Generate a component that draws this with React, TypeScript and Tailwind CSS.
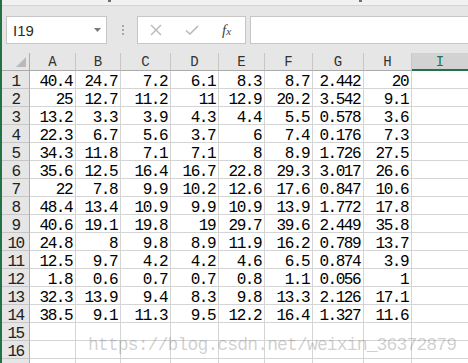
import React from "react";

const data: string[][] = [
  ["40.4", "24.7", "7.2", "6.1", "8.3", "8.7", "2.442", "20"],
  ["25", "12.7", "11.2", "11", "12.9", "20.2", "3.542", "9.1"],
  ["13.2", "3.3", "3.9", "4.3", "4.4", "5.5", "0.578", "3.6"],
  ["22.3", "6.7", "5.6", "3.7", "6", "7.4", "0.176", "7.3"],
  ["34.3", "11.8", "7.1", "7.1", "8", "8.9", "1.726", "27.5"],
  ["35.6", "12.5", "16.4", "16.7", "22.8", "29.3", "3.017", "26.6"],
  ["22", "7.8", "9.9", "10.2", "12.6", "17.6", "0.847", "10.6"],
  ["48.4", "13.4", "10.9", "9.9", "10.9", "13.9", "1.772", "17.8"],
  ["40.6", "19.1", "19.8", "19", "29.7", "39.6", "2.449", "35.8"],
  ["24.8", "8", "9.8", "8.9", "11.9", "16.2", "0.789", "13.7"],
  ["12.5", "9.7", "4.2", "4.2", "4.6", "6.5", "0.874", "3.9"],
  ["1.8", "0.6", "0.7", "0.7", "0.8", "1.1", "0.056", "1"],
  ["32.3", "13.9", "9.4", "8.3", "9.8", "13.3", "2.126", "17.1"],
  ["38.5", "9.1", "11.3", "9.5", "12.2", "16.4", "1.327", "11.6"],
  ["", "", "", "", "", "", "", ""],
  ["", "", "", "", "", "", "", ""],
  ["", "", "", "", "", "", "", ""],
];

const letters = ["A", "B", "C", "D", "E", "F", "G", "H"];

const Toolbar = () => (
  <div className="flex flex-col">
    {/* title strip */}
    <div className="h-[6px] bg-[#f1f1f1] border-b border-[#d4d4d4] flex items-start">
      <div className="ml-[106px] w-[3px] h-[2px] bg-[#6f6f6f]" />
      <div className="ml-[248px] w-[3px] h-[2px] bg-[#6f6f6f]" />
    </div>

    {/* name box + formula bar */}
    <div className="h-[47px] bg-[#e6e6e6] flex items-start pt-[10px]">
      <div className="ml-[4px] w-[101px] h-[28px] bg-white border border-[#c6c6c6] flex items-center justify-between pl-[6px] pr-[5px]">
        <span className="font-['Liberation_Sans',sans-serif] text-[15px] text-[#2b2b2b] leading-none">
          I19
        </span>
        <svg width="7" height="4" viewBox="0 0 7 4">
          <path d="M0 0 L7 0 L3.5 4 Z" fill="#7a7a7a" />
        </svg>
      </div>

      <div className="ml-[15px] h-[28px] flex flex-col justify-center gap-[2px]">
        <div className="w-[2px] h-[2px] bg-[#a8a8a8]" />
        <div className="w-[2px] h-[2px] bg-[#a8a8a8]" />
        <div className="w-[2px] h-[2px] bg-[#a8a8a8]" />
      </div>

      <div className="ml-[13px] w-[109px] h-[28px] bg-white border border-[#c6c6c6] flex items-center pl-[11px]">
        <svg width="14" height="14" viewBox="0 0 14 14">
          <path d="M2 2 L12 12 M12 2 L2 12" stroke="#b8b8b8" strokeWidth="1.4" fill="none" />
        </svg>
        <svg className="ml-[22px]" width="14" height="14" viewBox="0 0 14 14">
          <path d="M1 7.5 L5 11 L13 3" stroke="#b8b8b8" strokeWidth="1.6" fill="none" />
        </svg>
        <span className="ml-[23px] font-['Liberation_Serif',serif] italic text-[15px] text-[#444] leading-none">
          f<span className="text-[11px]">x</span>
        </span>
      </div>

      <div className="ml-[4px] flex-1 h-[28px] bg-white border border-r-0 border-[#c6c6c6]" />
    </div>
  </div>
);

const Grid = () => (
  <div className="grid grid-cols-[28px_46px_45px_50px_48px_46px_48px_51px_48px_1fr] font-['Liberation_Mono',monospace]">
    {/* header row */}
    <div className="h-[18px] bg-[#e6e6e6] border-r border-b border-[#ababab] flex items-end justify-end pr-[3px] pb-[3px]">
      <svg width="10" height="10" viewBox="0 0 10 10">
        <path d="M10 0 L10 10 L0 10 Z" fill="#b9b9b9" />
      </svg>
    </div>
    {letters.map((l) => (
      <div
        key={l}
        className="h-[18px] bg-[#e6e6e6] border-r border-[#c6c6c6] border-b border-b-[#ababab] text-center text-[14px] leading-[12px] pt-[3px] text-[#333]"
      >
        {l}
      </div>
    ))}
    <div className="h-[18px] bg-[#d2d2d2] border-b-2 border-[#217346] text-center text-[14px] leading-[12px] pt-[3px] text-[#217346]">
      I
    </div>

    {data.map((row, r) => (
      <React.Fragment key={r}>
        <div className="h-[18px] bg-[#e6e6e6] border-r border-[#ababab] border-b border-b-[#c6c6c6] text-center text-[16px] leading-[12px] pt-[5px] text-[#222] tracking-[-1.5px]">
          {r < 16 ? r + 1 : ""}
        </div>
        {row.map((v, c) => (
          <div
            key={c}
            className="h-[18px] border-r border-b border-[#d4d4d4] text-right text-[16px] leading-[12px] pt-[5px] pr-[3px] text-black tracking-[-1.5px] whitespace-nowrap"
          >
            {v}
          </div>
        ))}
        <div className="h-[18px] border-b border-[#d4d4d4]" />
      </React.Fragment>
    ))}
  </div>
);

export default function App() {
  return (
    <div className="relative w-[468px] h-[363px] overflow-hidden bg-white flex">
      <div className="w-[2px] shrink-0 bg-[#217346]" />
      <div className="flex-1 flex flex-col">
        <Toolbar />
        <Grid />
      </div>

      {/* watermark */}
      <div className="absolute left-[88px] top-[336px] pointer-events-none font-['Liberation_Mono',monospace] text-[18px] leading-[18px] tracking-[-0.85px] text-[rgba(120,120,120,0.35)] whitespace-nowrap">
        https://blog.csdn.net/weixin_36372879
      </div>
    </div>
  );
}
